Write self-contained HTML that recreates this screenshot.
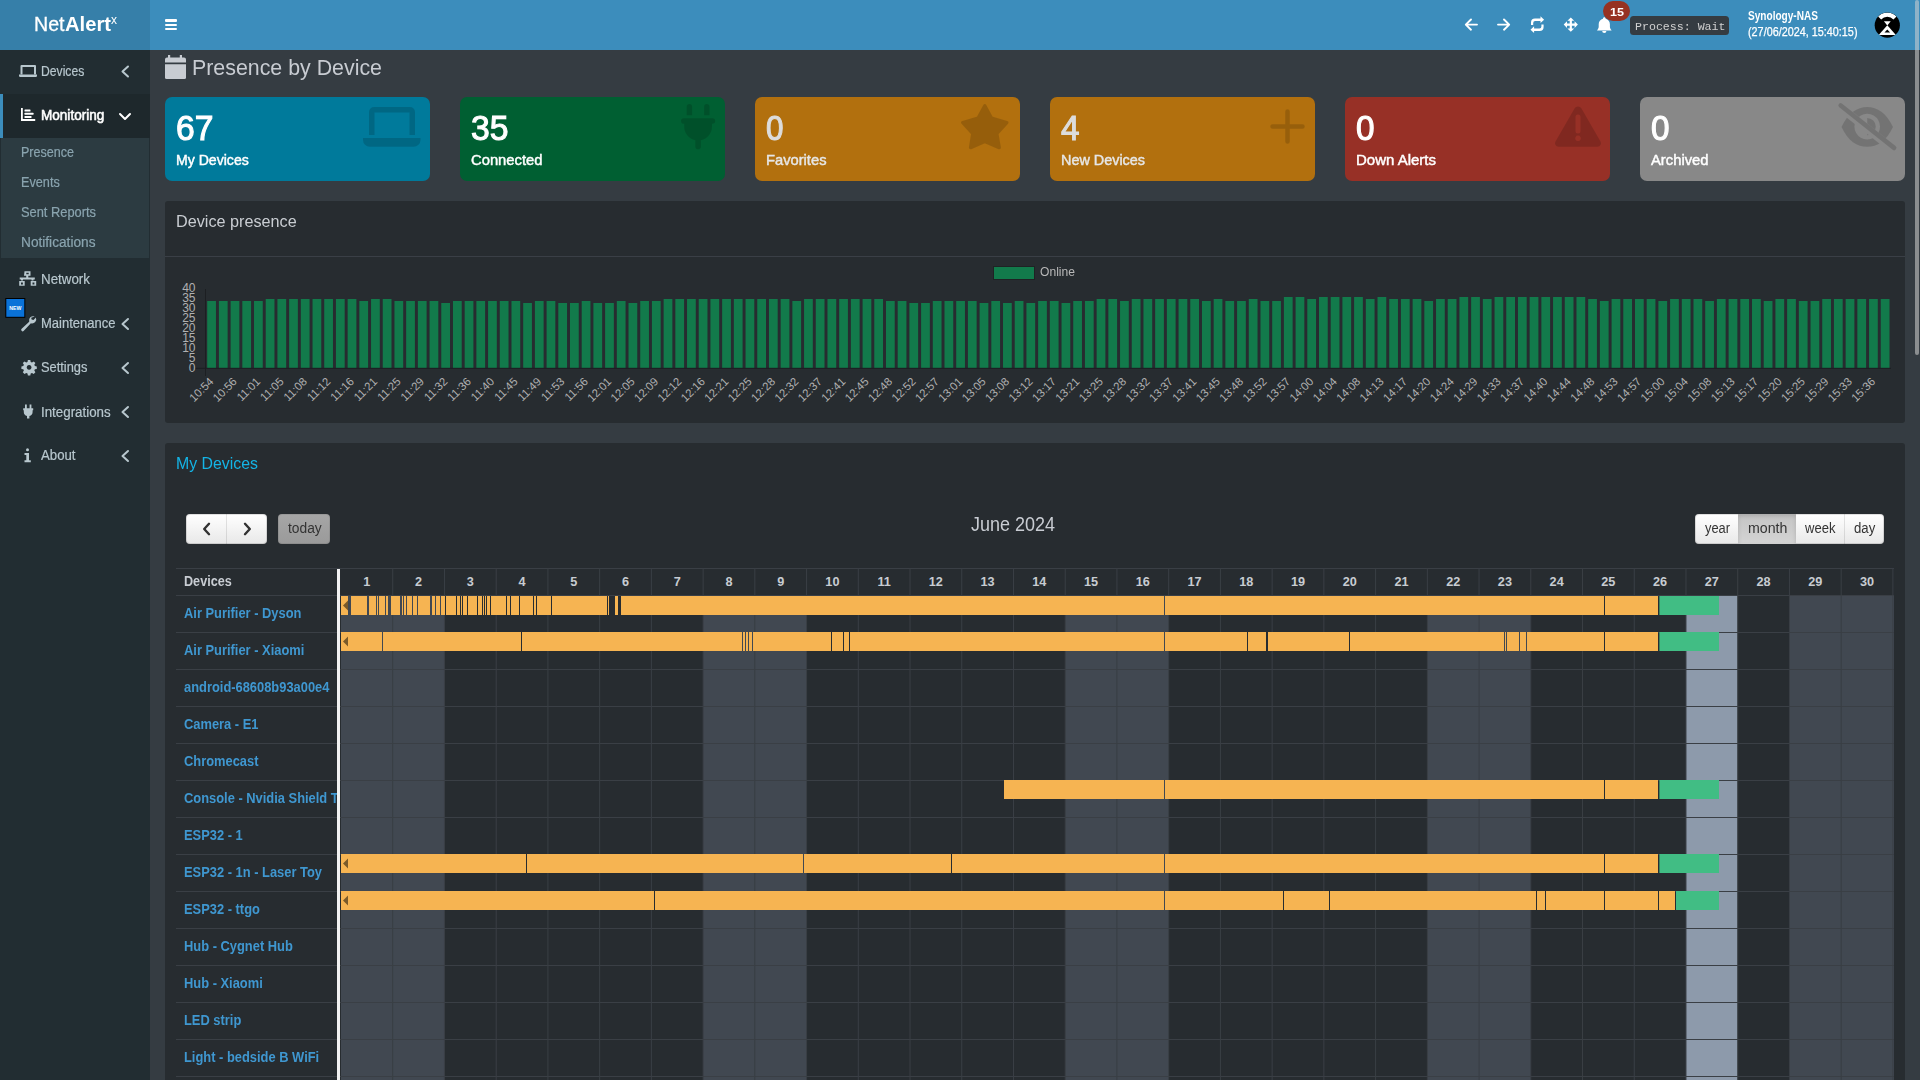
<!DOCTYPE html>
<html><head><meta charset="utf-8"><title>NetAlertX - Presence</title>
<style>
html,body{margin:0;padding:0;width:1920px;height:1080px;overflow:hidden;background:#353c42;font-family:"Liberation Sans",sans-serif}
.r{position:absolute}
.t{position:absolute;white-space:nowrap;line-height:1;transform-origin:0 0}
.btn{background:linear-gradient(#ffffff,#e8e8e8);box-shadow:inset 0 0 0 1px rgba(0,0,0,0.12)}
</style></head><body>
<div class="r" style="left:150.00px;top:50.00px;width:1770.00px;height:1030.00px;background:#353c42;"></div>
<div class="r" style="left:0.00px;top:50.00px;width:150.00px;height:1030.00px;background:#222d32;"></div>
<div class="r" style="left:0.00px;top:0.00px;width:150.00px;height:50.00px;background:#367fa9;"></div>
<div class="r" style="left:150.00px;top:0.00px;width:1770.00px;height:50.00px;background:#3c8dbc;"></div>
<span id="t1" class="t" style="left:34.00px;top:14.25px;font-size:20.50px;color:#fff;font-weight:400;font-family:'Liberation Sans', sans-serif;transform:scaleX(0.9559);-webkit-text-stroke:0.3px #fff;">Net</span>
<span id="t2" class="t" style="left:64.50px;top:14.25px;font-size:20.50px;color:#fff;font-weight:700;font-family:'Liberation Sans', sans-serif;transform:scaleX(0.9846);">Alert</span>
<span id="t3" class="t" style="left:111.00px;top:14.22px;font-size:12.50px;color:#fff;font-weight:400;font-family:'Liberation Sans', sans-serif;transform:scaleX(0.9600);">x</span>
<div class="r" style="left:165.20px;top:19.30px;width:12.00px;height:2.50px;background:#fff;border-radius:1px"></div>
<div class="r" style="left:165.20px;top:23.60px;width:12.00px;height:2.50px;background:#fff;border-radius:1px"></div>
<div class="r" style="left:165.20px;top:27.80px;width:12.00px;height:2.50px;background:#fff;border-radius:1px"></div>

<svg class="r" style="left:0;top:0" width="1920" height="50" viewBox="0 0 1920 50">
 <g fill="none" stroke="#fff" stroke-width="1.9" stroke-linecap="round" stroke-linejoin="round">
  <path d="M1477 24.6H1466 M1471 19.5L1465.8 24.6L1471 29.7"/>
  <path d="M1498 24.6H1509 M1504 19.5L1509.2 24.6L1504 29.7"/>
 </g>
 <g fill="#fff">
  <path d="M1531 25 v-2.5 a4 4 0 0 1 4 -4 h5.5 v-2.2 l3.6 3.4 l-3.6 3.4 v-2.2 h-5.3 a2 2 0 0 0 -2 2 v2.1z"/>
  <path d="M1543.6 24.4 v2.5 a4 4 0 0 1 -4 4 h-5.5 v2.2 l-3.6 -3.4 l3.6 -3.4 v2.2 h5.3 a2 2 0 0 0 2 -2 v-2.1z"/>
  <path d="M1570.8 17.5 l3.4 3.3 h-2.3 v2.7 h2.7 v-2.3 l3.3 3.4 l-3.3 3.4 v-2.3 h-2.7 v2.7 h2.3 l-3.4 3.3 l-3.4 -3.3 h2.3 v-2.7 h-2.7 v2.3 l-3.3 -3.4 l3.3 -3.4 v2.3 h2.7 v-2.7 h-2.3z"/>
  <path d="M1604.3 17.2 c-0.8 0 -1.3 0.6 -1.3 1.3 v0.3 c-2.6 0.6 -4.3 2.8 -4.3 5.5 v2.2 c0 1.3 -0.5 2.5 -1.4 3.5 l-0.3 0.4 h14.6 l-0.3 -0.4 c-0.9 -1 -1.4 -2.2 -1.4 -3.5 v-2.2 c0 -2.7 -1.8 -4.9 -4.3 -5.5 v-0.3 c0 -0.7 -0.5 -1.3 -1.3 -1.3z M1602.2 31 a2.1 2.1 0 0 0 4.2 0z"/>
 </g>
 <rect x="1603" y="1" width="27" height="20" rx="10" fill="#963222"/>
 <rect x="1630" y="16" width="99" height="19" rx="3.5" fill="#353c42"/>
 <clipPath id="avc"><circle cx="1887.3" cy="25.2" r="12.6"/></clipPath>
 <g clip-path="url(#avc)">
  <rect x="1870" y="10" width="35" height="32" fill="#000"/>
  <path d="M1878.08 16.6 A12.6 12.6 0 0 1 1896.52 16.6 L1893.44 19.47 A8.4 8.4 0 0 0 1881.16 19.47z" fill="#fff"/>
  <path d="M1883.9 21.2 h6.8 l-3.4 4.4z" fill="#fff"/>
  <path d="M1887.3 25.3 l8.6 9.6 h-17.2z" fill="#fff"/>
  <path d="M1887.3 29.6 l2.8 2.8 h-5.6z" fill="#000"/>
 </g>
</svg>
<span id="t4" class="t" style="left:1609.50px;top:7.19px;font-size:11.00px;color:#fff;font-weight:700;font-family:'Liberation Sans', sans-serif;transform:scaleX(1.1429);">15</span>
<span id="t5" class="t" style="left:1634.50px;top:20.78px;font-size:11.60px;color:#d0d0d0;font-weight:400;font-family:'Liberation Mono', monospace;transform:scaleX(1.0005);">Process: Wait</span>
<span id="t6" class="t" style="left:1747.50px;top:10.34px;font-size:12.00px;color:#fff;font-weight:700;font-family:'Liberation Sans', sans-serif;transform:scaleX(0.8399);">Synology-NAS</span>
<span id="t7" class="t" style="left:1747.50px;top:26.44px;font-size:12.00px;color:#fff;font-weight:400;font-family:'Liberation Sans', sans-serif;transform:scaleX(0.9017);-webkit-text-stroke:0.25px #fff;">(27/06/2024, 15:40:15)</span>
<div class="r" style="left:0.00px;top:94.00px;width:150.00px;height:44.00px;background:#1e282c;"></div>
<div class="r" style="left:0.00px;top:94.00px;width:3.00px;height:44.00px;background:#3c8dbc;"></div>
<div class="r" style="left:1.00px;top:138.00px;width:148.00px;height:120.00px;background:#2c3b41;"></div>
<span id="t8" class="t" style="left:41.00px;top:64.72px;font-size:13.80px;color:#b8c7ce;font-weight:400;font-family:'Liberation Sans', sans-serif;transform:scaleX(0.8823);-webkit-text-stroke:0.2px #b8c7ce;">Devices</span>
<span id="t9" class="t" style="left:41.00px;top:109.02px;font-size:13.80px;color:#fff;font-weight:400;font-family:'Liberation Sans', sans-serif;transform:scaleX(0.9826);-webkit-text-stroke:0.55px #fff;">Monitoring</span>
<span id="t10" class="t" style="left:41.00px;top:273.32px;font-size:13.80px;color:#b8c7ce;font-weight:400;font-family:'Liberation Sans', sans-serif;transform:scaleX(0.9682);-webkit-text-stroke:0.2px #b8c7ce;">Network</span>
<span id="t11" class="t" style="left:41.00px;top:317.02px;font-size:13.80px;color:#b8c7ce;font-weight:400;font-family:'Liberation Sans', sans-serif;transform:scaleX(0.9441);-webkit-text-stroke:0.2px #b8c7ce;">Maintenance</span>
<span id="t12" class="t" style="left:41.00px;top:361.22px;font-size:13.80px;color:#b8c7ce;font-weight:400;font-family:'Liberation Sans', sans-serif;transform:scaleX(0.9306);-webkit-text-stroke:0.2px #b8c7ce;">Settings</span>
<span id="t13" class="t" style="left:41.00px;top:405.52px;font-size:13.80px;color:#b8c7ce;font-weight:400;font-family:'Liberation Sans', sans-serif;transform:scaleX(0.9666);-webkit-text-stroke:0.2px #b8c7ce;">Integrations</span>
<span id="t14" class="t" style="left:41.00px;top:449.22px;font-size:13.80px;color:#b8c7ce;font-weight:400;font-family:'Liberation Sans', sans-serif;transform:scaleX(0.9567);-webkit-text-stroke:0.2px #b8c7ce;">About</span>
<span id="t15" class="t" style="left:20.80px;top:146.32px;font-size:13.80px;color:#8aa4af;font-weight:400;font-family:'Liberation Sans', sans-serif;transform:scaleX(0.9091);-webkit-text-stroke:0.2px #8aa4af;">Presence</span>
<span id="t16" class="t" style="left:20.80px;top:176.32px;font-size:13.80px;color:#8aa4af;font-weight:400;font-family:'Liberation Sans', sans-serif;transform:scaleX(0.9185);-webkit-text-stroke:0.2px #8aa4af;">Events</span>
<span id="t17" class="t" style="left:20.80px;top:206.32px;font-size:13.80px;color:#8aa4af;font-weight:400;font-family:'Liberation Sans', sans-serif;transform:scaleX(0.9313);-webkit-text-stroke:0.2px #8aa4af;">Sent Reports</span>
<span id="t18" class="t" style="left:20.80px;top:236.32px;font-size:13.80px;color:#8aa4af;font-weight:400;font-family:'Liberation Sans', sans-serif;transform:scaleX(0.9913);-webkit-text-stroke:0.2px #8aa4af;">Notifications</span>

<svg class="r" style="left:0;top:50" width="150" height="430" viewBox="0 50 150 430">
 <g fill="none" stroke="#b8c7ce" stroke-width="2" stroke-linecap="round" stroke-linejoin="round">
  <path d="M128 66.5 L122.5 71.5 L128 76.5"/>
  <path d="M128 319 L122.5 324 L128 329"/>
  <path d="M128 363 L122.5 368 L128 373"/>
  <path d="M128 407 L122.5 412 L128 417"/>
  <path d="M128 451 L122.5 456 L128 461"/>
 </g>
 <path d="M120 114 L125 119 L130 114" fill="none" stroke="#fff" stroke-width="2" stroke-linecap="round" stroke-linejoin="round"/>
 <g fill="#b8c7ce">
  <path d="M21.5 65 h13.5 a1 1 0 0 1 1 1 v8.5 h-2 v-7.5 h-11.5 v7.5 h-2 v-8.5 a1 1 0 0 1 1 -1z"/>
  <path d="M19 74.5 h18 v1.3 a1.2 1.2 0 0 1 -1.2 1.2 h-15.6 a1.2 1.2 0 0 1 -1.2 -1.2z"/>
 </g>
 <g fill="#fff">
  <path d="M21 108 h1.8 v11 h12.4 v2 h-14.2z"/>
  <rect x="24.5" y="109.5" width="6" height="2" rx="0.5"/>
  <rect x="24.5" y="112.8" width="9" height="2" rx="0.5"/>
  <rect x="24.5" y="116" width="7" height="2" rx="0.5"/>
 </g>
 <g fill="#b8c7ce">
  <path d="M24.5 271.3 h6 v4.5 h-2.2 v1.6 h6.5 v2 h-1.3 v1.2 h-2 v-1.2 h-8.5 v1.2 h-2 v-1.2 h-1.3 v-2 h6.5 v-1.6 h-2.2z M26.3 272.8 v1.5 h2.4 v-1.5z"/>
  <path d="M19.2 281 h5.5 v4.8 h-5.5z M21 282.4 v2 h1.9 v-2z"/>
  <path d="M30.7 281 h5.5 v4.8 h-5.5z M32.5 282.4 v2 h1.9 v-2z"/>
  <path d="M34.8 316.5 a4.2 4.2 0 0 0 -5.6 5.2 l-7.8 7.2 a1.6 1.6 0 0 0 2.2 2.2 l7.3 -7.8 a4.2 4.2 0 0 0 5 -5.7 l-2.4 2.4 l-1.9 -0.4 l-0.4 -1.9z"/>
  <path d="M27.9 360 h2.4 l0.4 1.9 l1.3 0.6 l1.7 -1.1 l1.7 1.7 l-1.1 1.7 l0.6 1.3 l1.9 0.4 v2.4 l-1.9 0.4 l-0.6 1.3 l1.1 1.7 l-1.7 1.7 l-1.7 -1.1 l-1.3 0.6 l-0.4 1.9 h-2.4 l-0.4 -1.9 l-1.3 -0.6 l-1.7 1.1 l-1.7 -1.7 l1.1 -1.7 l-0.6 -1.3 l-1.9 -0.4 v-2.4 l1.9 -0.4 l0.6 -1.3 l-1.1 -1.7 l1.7 -1.7 l1.7 1.1 l1.3 -0.6z M29.1 365 a2.4 2.4 0 1 0 0.01 0z"/>
  <path d="M25 404.6 h1.8 v3.6 h2.8 v-3.6 h1.8 v3.6 h1.8 v2 h-0.6 v1.8 a4 4 0 0 1 -3.2 3.9 v2.5 h-2.4 v-2.5 a4 4 0 0 1 -3.2 -3.9 v-1.8 h-0.6 v-2 h1.8z"/>
  <rect x="26" y="448.3" width="3" height="3" rx="1.5"/>
  <path d="M24.5 453 h4.5 v7.3 h1.8 v1.9 h-6.3 v-1.9 h1.8 v-5.4 h-1.8z"/>
 </g>
 <rect x="5.3" y="298" width="20" height="19.8" fill="#000"/>
 <rect x="6.3" y="299" width="18" height="17.8" fill="#0a72d8"/>
 <text x="15.3" y="310.2" font-family="Liberation Sans" font-size="5.2" font-weight="700" fill="#fff" text-anchor="middle">NEW</text>
</svg>
<svg class="r" style="left:163px;top:53px" width="26" height="28" viewBox="163 53 26 28">
 <path d="M168 55 h2.2 v2.5 h9.6 v-2.5 h2.2 v2.5 h2 a2 2 0 0 1 2 2 v3 h-21 v-3 a2 2 0 0 1 2 -2 h1z" fill="#c8ccd2"/>
 <path d="M165 64.2 h21 v13.3 a1.5 1.5 0 0 1 -1.5 1.5 h-18 a1.5 1.5 0 0 1 -1.5 -1.5z" fill="#c8ccd2"/>
</svg>
<span id="t19" class="t" style="left:192.00px;top:58.30px;font-size:21.50px;color:#c8ccd2;font-weight:400;font-family:'Liberation Sans', sans-serif;transform:scaleX(0.9937);">Presence by Device</span>
<div class="r" style="left:165.00px;top:97.00px;width:265.00px;height:84.00px;background:#007a9b;border-radius:7px"></div>
<span id="t20" class="t" style="left:175.60px;top:110.37px;font-size:35.00px;color:#fff;font-weight:400;font-family:'Liberation Sans', sans-serif;transform:scaleX(0.9605);-webkit-text-stroke:1.1px #fff;">67</span>
<span id="t21" class="t" style="left:175.60px;top:152.77px;font-size:14.80px;color:#fff;font-weight:400;font-family:'Liberation Sans', sans-serif;transform:scaleX(0.9520);-webkit-text-stroke:0.45px #fff;">My Devices</span>
<div class="r" style="left:460.00px;top:97.00px;width:265.00px;height:84.00px;background:#005f32;border-radius:7px"></div>
<span id="t22" class="t" style="left:470.60px;top:110.37px;font-size:35.00px;color:#fff;font-weight:400;font-family:'Liberation Sans', sans-serif;transform:scaleX(0.9631);-webkit-text-stroke:1.1px #fff;">35</span>
<span id="t23" class="t" style="left:470.60px;top:152.77px;font-size:14.80px;color:#fff;font-weight:400;font-family:'Liberation Sans', sans-serif;transform:scaleX(0.9989);-webkit-text-stroke:0.45px #fff;">Connected</span>
<div class="r" style="left:755.00px;top:97.00px;width:265.00px;height:84.00px;background:#b2700e;border-radius:7px"></div>
<span id="t24" class="t" style="left:765.60px;top:110.37px;font-size:35.00px;color:#dcdcdc;font-weight:400;font-family:'Liberation Sans', sans-serif;transform:scaleX(0.8989);-webkit-text-stroke:1.1px #dcdcdc;">0</span>
<span id="t25" class="t" style="left:765.60px;top:152.77px;font-size:14.80px;color:#e6e6e6;font-weight:400;font-family:'Liberation Sans', sans-serif;transform:scaleX(0.9941);-webkit-text-stroke:0.45px #e6e6e6;">Favorites</span>
<div class="r" style="left:1050.00px;top:97.00px;width:265.00px;height:84.00px;background:#b2700e;border-radius:7px"></div>
<span id="t26" class="t" style="left:1060.60px;top:110.37px;font-size:35.00px;color:#dcdcdc;font-weight:400;font-family:'Liberation Sans', sans-serif;transform:scaleX(0.9502);-webkit-text-stroke:1.1px #dcdcdc;">4</span>
<span id="t27" class="t" style="left:1060.60px;top:152.77px;font-size:14.80px;color:#e6e6e6;font-weight:400;font-family:'Liberation Sans', sans-serif;transform:scaleX(0.9729);-webkit-text-stroke:0.45px #e6e6e6;">New Devices</span>
<div class="r" style="left:1345.00px;top:97.00px;width:265.00px;height:84.00px;background:#973026;border-radius:7px"></div>
<span id="t28" class="t" style="left:1355.60px;top:110.37px;font-size:35.00px;color:#fff;font-weight:400;font-family:'Liberation Sans', sans-serif;transform:scaleX(0.9502);-webkit-text-stroke:1.1px #fff;">0</span>
<span id="t29" class="t" style="left:1355.60px;top:152.77px;font-size:14.80px;color:#fff;font-weight:400;font-family:'Liberation Sans', sans-serif;transform:scaleX(1.0133);-webkit-text-stroke:0.45px #fff;">Down Alerts</span>
<div class="r" style="left:1640.00px;top:97.00px;width:265.00px;height:84.00px;background:#888888;border-radius:7px"></div>
<span id="t30" class="t" style="left:1650.60px;top:110.37px;font-size:35.00px;color:#fff;font-weight:400;font-family:'Liberation Sans', sans-serif;transform:scaleX(0.9502);-webkit-text-stroke:1.1px #fff;">0</span>
<span id="t31" class="t" style="left:1650.60px;top:152.77px;font-size:14.80px;color:#fff;font-weight:400;font-family:'Liberation Sans', sans-serif;transform:scaleX(0.9986);-webkit-text-stroke:0.45px #fff;">Archived</span>
<svg class="r" style="left:0;top:90px" width="1920" height="70" viewBox="0 90 1920 70">
 <g fill="rgba(0,0,0,0.15)">
  <path d="M374 107 h36 a5 5 0 0 1 5 5 v23 h-5.5 v-22.5 h-35 v22.5 h-5.5 v-23 a5 5 0 0 1 5 -5z"/>
  <path d="M363 138 h57.5 v2 a6.8 6.8 0 0 1 -6.8 6.8 h-43.9 a6.8 6.8 0 0 1 -6.8 -6.8z"/>
  <path d="M689.4 104 a2.7 2.7 0 0 1 2.7 2.7 v8.5 h-5.4 v-8.5 a2.7 2.7 0 0 1 2.7 -2.7z M706.8 104 a2.7 2.7 0 0 1 2.7 2.7 v8.5 h-5.4 v-8.5 a2.7 2.7 0 0 1 2.7 -2.7z"/>
  <path d="M683.8 118.2 h28.6 a2.8 2.8 0 0 1 0 5.6 h-0.4 v2.5 a14 14 0 0 1 -11.1 14 v6.2 a2.8 2.8 0 0 1 -5.6 0 v-6.2 a14 14 0 0 1 -11.1 -14 v-2.5 h-0.4 a2.8 2.8 0 0 1 0 -5.6z"/>
  <path d="M1578 106.5 a4 4 0 0 1 3.5 2 l19 33 a3.5 3.5 0 0 1 -3 5.3 h-39 a3.5 3.5 0 0 1 -3 -5.3 l19 -33 a4 4 0 0 1 3.5 -2z M1575.5 117 v14 a2.5 2.5 0 0 0 5 0 v-14 a2.5 2.5 0 0 0 -5 0z M1578 135.5 a2.8 2.8 0 1 0 0.01 0z"/>
 </g>
 <g opacity="0.15"><path d="M984.8 105.8 L991.6 118.2 L1006.8 122.6 L996.8 133.6 L999.2 147.6 L984.8 141.4 L970.6 147.6 L972.8 133.6 L962.8 122.6 L978 118.2z" fill="#000" stroke="#000" stroke-width="3.4" stroke-linejoin="round"/></g>
 <path d="M1287.5 111.5 v30 M1272.5 126.5 h30" stroke="rgba(0,0,0,0.15)" stroke-width="4.5" stroke-linecap="round"/>
 <mask id="eyem"><rect x="1830" y="95" width="75" height="60" fill="#fff"/><path d="M1839.67 106.79 L1893.07 149.19" stroke="#000" stroke-width="8.2"/></mask>
 <g fill="rgba(0,0,0,0.15)">
  <path mask="url(#eyem)" fill-rule="evenodd" d="M1841.5 126.9 C1848 113 1857 106.9 1867.2 106.9 C1877.4 106.9 1886.5 113 1893 126.9 C1886.5 140.8 1877.4 146.8 1867.2 146.8 C1857 146.8 1848 140.8 1841.5 126.9z M1867.2 113.8 a12.8 12.8 0 1 0 0.01 0z M1867.2 118 a8.6 8.6 0 0 1 0 17.2z"/>
 </g>
 <path d="M1840.7 105.5 L1894.1 147.9" stroke="rgba(0,0,0,0.15)" stroke-width="4.7" stroke-linecap="round"/>
</svg>
<div class="r" style="left:165.00px;top:201.00px;width:1740.00px;height:221.50px;background:#272c30;border-radius:3px"></div>
<div class="r" style="left:165.00px;top:256.00px;width:1740.00px;height:1.00px;background:#3a3f46;"></div>
<span id="t32" class="t" style="left:176.25px;top:212.94px;font-size:17.20px;color:#c9cdd2;font-weight:400;font-family:'Liberation Sans', sans-serif;transform:scaleX(0.9431);">Device presence</span>
<div class="r" style="left:994.00px;top:267.00px;width:40.00px;height:12.00px;background:#127a4b;outline:1px solid rgba(20,20,20,0.4)"></div>
<span id="t33" class="t" style="left:1040.30px;top:265.87px;font-size:12.20px;color:#b8b8b8;font-weight:400;font-family:'Liberation Sans', sans-serif;transform:scaleX(0.9933);">Online</span>
<svg class="r" style="left:0;top:270px" width="1920" height="150" viewBox="0 270 1920 150"><g fill="#127a4b"><rect x="207.20" y="301" width="8.75" height="67"/><rect x="218.90" y="301" width="8.75" height="67"/><rect x="230.61" y="301" width="8.75" height="67"/><rect x="242.31" y="301" width="8.75" height="67"/><rect x="254.01" y="301" width="8.75" height="67"/><rect x="265.72" y="299" width="8.75" height="69"/><rect x="277.42" y="299" width="8.75" height="69"/><rect x="289.12" y="299" width="8.75" height="69"/><rect x="300.82" y="299" width="8.75" height="69"/><rect x="312.53" y="299" width="8.75" height="69"/><rect x="324.23" y="299" width="8.75" height="69"/><rect x="335.93" y="299" width="8.75" height="69"/><rect x="347.64" y="299" width="8.75" height="69"/><rect x="359.34" y="301" width="8.75" height="67"/><rect x="371.04" y="299" width="8.75" height="69"/><rect x="382.75" y="299" width="8.75" height="69"/><rect x="394.45" y="301" width="8.75" height="67"/><rect x="406.15" y="301" width="8.75" height="67"/><rect x="417.86" y="301" width="8.75" height="67"/><rect x="429.56" y="301" width="8.75" height="67"/><rect x="441.26" y="303" width="8.75" height="65"/><rect x="452.97" y="301" width="8.75" height="67"/><rect x="464.67" y="301" width="8.75" height="67"/><rect x="476.37" y="301" width="8.75" height="67"/><rect x="488.07" y="301" width="8.75" height="67"/><rect x="499.78" y="301" width="8.75" height="67"/><rect x="511.48" y="301" width="8.75" height="67"/><rect x="523.18" y="303" width="8.75" height="65"/><rect x="534.89" y="301" width="8.75" height="67"/><rect x="546.59" y="301" width="8.75" height="67"/><rect x="558.29" y="303" width="8.75" height="65"/><rect x="570.00" y="303" width="8.75" height="65"/><rect x="581.70" y="301" width="8.75" height="67"/><rect x="593.40" y="303" width="8.75" height="65"/><rect x="605.11" y="303" width="8.75" height="65"/><rect x="616.81" y="301" width="8.75" height="67"/><rect x="628.51" y="303" width="8.75" height="65"/><rect x="640.22" y="301" width="8.75" height="67"/><rect x="651.92" y="301" width="8.75" height="67"/><rect x="663.62" y="299" width="8.75" height="69"/><rect x="675.33" y="299" width="8.75" height="69"/><rect x="687.03" y="299" width="8.75" height="69"/><rect x="698.73" y="299" width="8.75" height="69"/><rect x="710.43" y="299" width="8.75" height="69"/><rect x="722.14" y="299" width="8.75" height="69"/><rect x="733.84" y="299" width="8.75" height="69"/><rect x="745.54" y="299" width="8.75" height="69"/><rect x="757.25" y="299" width="8.75" height="69"/><rect x="768.95" y="299" width="8.75" height="69"/><rect x="780.65" y="299" width="8.75" height="69"/><rect x="792.36" y="301" width="8.75" height="67"/><rect x="804.06" y="299" width="8.75" height="69"/><rect x="815.76" y="299" width="8.75" height="69"/><rect x="827.47" y="299" width="8.75" height="69"/><rect x="839.17" y="299" width="8.75" height="69"/><rect x="850.87" y="299" width="8.75" height="69"/><rect x="862.58" y="299" width="8.75" height="69"/><rect x="874.28" y="299" width="8.75" height="69"/><rect x="885.98" y="301" width="8.75" height="67"/><rect x="897.68" y="301" width="8.75" height="67"/><rect x="909.39" y="303" width="8.75" height="65"/><rect x="921.09" y="303" width="8.75" height="65"/><rect x="932.79" y="301" width="8.75" height="67"/><rect x="944.50" y="301" width="8.75" height="67"/><rect x="956.20" y="301" width="8.75" height="67"/><rect x="967.90" y="301" width="8.75" height="67"/><rect x="979.61" y="303" width="8.75" height="65"/><rect x="991.31" y="301" width="8.75" height="67"/><rect x="1003.01" y="303" width="8.75" height="65"/><rect x="1014.72" y="301" width="8.75" height="67"/><rect x="1026.42" y="303" width="8.75" height="65"/><rect x="1038.12" y="301" width="8.75" height="67"/><rect x="1049.83" y="301" width="8.75" height="67"/><rect x="1061.53" y="303" width="8.75" height="65"/><rect x="1073.23" y="301" width="8.75" height="67"/><rect x="1084.93" y="301" width="8.75" height="67"/><rect x="1096.64" y="299" width="8.75" height="69"/><rect x="1108.34" y="299" width="8.75" height="69"/><rect x="1120.04" y="301" width="8.75" height="67"/><rect x="1131.75" y="299" width="8.75" height="69"/><rect x="1143.45" y="299" width="8.75" height="69"/><rect x="1155.15" y="299" width="8.75" height="69"/><rect x="1166.86" y="299" width="8.75" height="69"/><rect x="1178.56" y="299" width="8.75" height="69"/><rect x="1190.26" y="299" width="8.75" height="69"/><rect x="1201.97" y="301" width="8.75" height="67"/><rect x="1213.67" y="299" width="8.75" height="69"/><rect x="1225.37" y="301" width="8.75" height="67"/><rect x="1237.08" y="301" width="8.75" height="67"/><rect x="1248.78" y="299" width="8.75" height="69"/><rect x="1260.48" y="301" width="8.75" height="67"/><rect x="1272.18" y="301" width="8.75" height="67"/><rect x="1283.89" y="297" width="8.75" height="71"/><rect x="1295.59" y="297" width="8.75" height="71"/><rect x="1307.29" y="299" width="8.75" height="69"/><rect x="1319.00" y="297" width="8.75" height="71"/><rect x="1330.70" y="297" width="8.75" height="71"/><rect x="1342.40" y="297" width="8.75" height="71"/><rect x="1354.11" y="297" width="8.75" height="71"/><rect x="1365.81" y="299" width="8.75" height="69"/><rect x="1377.51" y="297" width="8.75" height="71"/><rect x="1389.22" y="299" width="8.75" height="69"/><rect x="1400.92" y="299" width="8.75" height="69"/><rect x="1412.62" y="299" width="8.75" height="69"/><rect x="1424.33" y="301" width="8.75" height="67"/><rect x="1436.03" y="299" width="8.75" height="69"/><rect x="1447.73" y="299" width="8.75" height="69"/><rect x="1459.43" y="297" width="8.75" height="71"/><rect x="1471.14" y="297" width="8.75" height="71"/><rect x="1482.84" y="299" width="8.75" height="69"/><rect x="1494.54" y="297" width="8.75" height="71"/><rect x="1506.25" y="297" width="8.75" height="71"/><rect x="1517.95" y="297" width="8.75" height="71"/><rect x="1529.65" y="297" width="8.75" height="71"/><rect x="1541.36" y="297" width="8.75" height="71"/><rect x="1553.06" y="297" width="8.75" height="71"/><rect x="1564.76" y="297" width="8.75" height="71"/><rect x="1576.47" y="297" width="8.75" height="71"/><rect x="1588.17" y="299" width="8.75" height="69"/><rect x="1599.87" y="301" width="8.75" height="67"/><rect x="1611.58" y="299" width="8.75" height="69"/><rect x="1623.28" y="299" width="8.75" height="69"/><rect x="1634.98" y="299" width="8.75" height="69"/><rect x="1646.68" y="299" width="8.75" height="69"/><rect x="1658.39" y="301" width="8.75" height="67"/><rect x="1670.09" y="299" width="8.75" height="69"/><rect x="1681.79" y="299" width="8.75" height="69"/><rect x="1693.50" y="299" width="8.75" height="69"/><rect x="1705.20" y="301" width="8.75" height="67"/><rect x="1716.90" y="299" width="8.75" height="69"/><rect x="1728.61" y="299" width="8.75" height="69"/><rect x="1740.31" y="299" width="8.75" height="69"/><rect x="1752.01" y="299" width="8.75" height="69"/><rect x="1763.72" y="301" width="8.75" height="67"/><rect x="1775.42" y="299" width="8.75" height="69"/><rect x="1787.12" y="299" width="8.75" height="69"/><rect x="1798.83" y="301" width="8.75" height="67"/><rect x="1810.53" y="301" width="8.75" height="67"/><rect x="1822.23" y="299" width="8.75" height="69"/><rect x="1833.93" y="299" width="8.75" height="69"/><rect x="1845.64" y="299" width="8.75" height="69"/><rect x="1857.34" y="299" width="8.75" height="69"/><rect x="1869.04" y="299" width="8.75" height="69"/><rect x="1880.75" y="299" width="8.75" height="69"/></g><path d="M205.5 289 V376 M195.5 368.3 H1891" stroke="#1c1f22" stroke-width="1" fill="none"/><g font-family="Liberation Sans" font-size="12" fill="#b0b0b0" text-anchor="end"><text x="195.5" y="372.3">0</text><text x="195.5" y="362.3">5</text><text x="195.5" y="352.3">10</text><text x="195.5" y="342.3">15</text><text x="195.5" y="332.3">20</text><text x="195.5" y="322.3">25</text><text x="195.5" y="312.3">30</text><text x="195.5" y="302.3">35</text><text x="195.5" y="292.3">40</text><text font-size="11.4" transform="translate(214.20 382.3) rotate(-45)">10:54</text><text font-size="11.4" transform="translate(237.61 382.3) rotate(-45)">10:56</text><text font-size="11.4" transform="translate(261.01 382.3) rotate(-45)">11:01</text><text font-size="11.4" transform="translate(284.42 382.3) rotate(-45)">11:05</text><text font-size="11.4" transform="translate(307.82 382.3) rotate(-45)">11:08</text><text font-size="11.4" transform="translate(331.23 382.3) rotate(-45)">11:12</text><text font-size="11.4" transform="translate(354.64 382.3) rotate(-45)">11:16</text><text font-size="11.4" transform="translate(378.04 382.3) rotate(-45)">11:21</text><text font-size="11.4" transform="translate(401.45 382.3) rotate(-45)">11:25</text><text font-size="11.4" transform="translate(424.86 382.3) rotate(-45)">11:29</text><text font-size="11.4" transform="translate(448.26 382.3) rotate(-45)">11:32</text><text font-size="11.4" transform="translate(471.67 382.3) rotate(-45)">11:36</text><text font-size="11.4" transform="translate(495.07 382.3) rotate(-45)">11:40</text><text font-size="11.4" transform="translate(518.48 382.3) rotate(-45)">11:45</text><text font-size="11.4" transform="translate(541.89 382.3) rotate(-45)">11:49</text><text font-size="11.4" transform="translate(565.29 382.3) rotate(-45)">11:53</text><text font-size="11.4" transform="translate(588.70 382.3) rotate(-45)">11:56</text><text font-size="11.4" transform="translate(612.11 382.3) rotate(-45)">12:01</text><text font-size="11.4" transform="translate(635.51 382.3) rotate(-45)">12:05</text><text font-size="11.4" transform="translate(658.92 382.3) rotate(-45)">12:09</text><text font-size="11.4" transform="translate(682.33 382.3) rotate(-45)">12:12</text><text font-size="11.4" transform="translate(705.73 382.3) rotate(-45)">12:16</text><text font-size="11.4" transform="translate(729.14 382.3) rotate(-45)">12:21</text><text font-size="11.4" transform="translate(752.54 382.3) rotate(-45)">12:25</text><text font-size="11.4" transform="translate(775.95 382.3) rotate(-45)">12:28</text><text font-size="11.4" transform="translate(799.36 382.3) rotate(-45)">12:32</text><text font-size="11.4" transform="translate(822.76 382.3) rotate(-45)">12:37</text><text font-size="11.4" transform="translate(846.17 382.3) rotate(-45)">12:41</text><text font-size="11.4" transform="translate(869.58 382.3) rotate(-45)">12:45</text><text font-size="11.4" transform="translate(892.98 382.3) rotate(-45)">12:48</text><text font-size="11.4" transform="translate(916.39 382.3) rotate(-45)">12:52</text><text font-size="11.4" transform="translate(939.79 382.3) rotate(-45)">12:57</text><text font-size="11.4" transform="translate(963.20 382.3) rotate(-45)">13:01</text><text font-size="11.4" transform="translate(986.61 382.3) rotate(-45)">13:05</text><text font-size="11.4" transform="translate(1010.01 382.3) rotate(-45)">13:08</text><text font-size="11.4" transform="translate(1033.42 382.3) rotate(-45)">13:12</text><text font-size="11.4" transform="translate(1056.83 382.3) rotate(-45)">13:17</text><text font-size="11.4" transform="translate(1080.23 382.3) rotate(-45)">13:21</text><text font-size="11.4" transform="translate(1103.64 382.3) rotate(-45)">13:25</text><text font-size="11.4" transform="translate(1127.04 382.3) rotate(-45)">13:28</text><text font-size="11.4" transform="translate(1150.45 382.3) rotate(-45)">13:32</text><text font-size="11.4" transform="translate(1173.86 382.3) rotate(-45)">13:37</text><text font-size="11.4" transform="translate(1197.26 382.3) rotate(-45)">13:41</text><text font-size="11.4" transform="translate(1220.67 382.3) rotate(-45)">13:45</text><text font-size="11.4" transform="translate(1244.08 382.3) rotate(-45)">13:48</text><text font-size="11.4" transform="translate(1267.48 382.3) rotate(-45)">13:52</text><text font-size="11.4" transform="translate(1290.89 382.3) rotate(-45)">13:57</text><text font-size="11.4" transform="translate(1314.29 382.3) rotate(-45)">14:00</text><text font-size="11.4" transform="translate(1337.70 382.3) rotate(-45)">14:04</text><text font-size="11.4" transform="translate(1361.11 382.3) rotate(-45)">14:08</text><text font-size="11.4" transform="translate(1384.51 382.3) rotate(-45)">14:13</text><text font-size="11.4" transform="translate(1407.92 382.3) rotate(-45)">14:17</text><text font-size="11.4" transform="translate(1431.33 382.3) rotate(-45)">14:20</text><text font-size="11.4" transform="translate(1454.73 382.3) rotate(-45)">14:24</text><text font-size="11.4" transform="translate(1478.14 382.3) rotate(-45)">14:29</text><text font-size="11.4" transform="translate(1501.54 382.3) rotate(-45)">14:33</text><text font-size="11.4" transform="translate(1524.95 382.3) rotate(-45)">14:37</text><text font-size="11.4" transform="translate(1548.36 382.3) rotate(-45)">14:40</text><text font-size="11.4" transform="translate(1571.76 382.3) rotate(-45)">14:44</text><text font-size="11.4" transform="translate(1595.17 382.3) rotate(-45)">14:48</text><text font-size="11.4" transform="translate(1618.58 382.3) rotate(-45)">14:53</text><text font-size="11.4" transform="translate(1641.98 382.3) rotate(-45)">14:57</text><text font-size="11.4" transform="translate(1665.39 382.3) rotate(-45)">15:00</text><text font-size="11.4" transform="translate(1688.79 382.3) rotate(-45)">15:04</text><text font-size="11.4" transform="translate(1712.20 382.3) rotate(-45)">15:08</text><text font-size="11.4" transform="translate(1735.61 382.3) rotate(-45)">15:13</text><text font-size="11.4" transform="translate(1759.01 382.3) rotate(-45)">15:17</text><text font-size="11.4" transform="translate(1782.42 382.3) rotate(-45)">15:20</text><text font-size="11.4" transform="translate(1805.83 382.3) rotate(-45)">15:25</text><text font-size="11.4" transform="translate(1829.23 382.3) rotate(-45)">15:29</text><text font-size="11.4" transform="translate(1852.64 382.3) rotate(-45)">15:33</text><text font-size="11.4" transform="translate(1876.04 382.3) rotate(-45)">15:36</text></g></svg>
<div class="r" style="left:165.00px;top:443.00px;width:1740.00px;height:700.00px;background:#272c30;border-radius:3px"></div>
<span id="t34" class="t" style="left:176.25px;top:454.86px;font-size:17.00px;color:#14b4e6;font-weight:400;font-family:'Liberation Sans', sans-serif;transform:scaleX(0.9333);">My Devices</span>
<div class="r btn" style="left:185.75px;top:514.25px;width:81.25px;height:29.5px;border-radius:4px"></div>
<div class="r" style="left:225.80px;top:514.25px;width:1.00px;height:29.50px;background:rgba(0,0,0,0.1);"></div>
<svg class="r" style="left:185px;top:514px" width="82" height="30" viewBox="185 514 82 30">
 <path d="M209 523.8 L204.2 529 L209 534.2 M245 523.8 L249.8 529 L245 534.2" fill="none" stroke="#333" stroke-width="2.4" stroke-linecap="round" stroke-linejoin="round"/>
</svg>
<div class="r" style="left:278px;top:514.25px;width:52px;height:29.5px;border-radius:4px;background:linear-gradient(#a6a6a6,#9a9a9a);box-shadow:inset 0 0 0 1px rgba(0,0,0,0.08)"></div>
<span id="t35" class="t" style="left:287.50px;top:521.15px;font-size:14.00px;color:#333;font-weight:400;font-family:'Liberation Sans', sans-serif;transform:scaleX(0.9854);">today</span>
<span id="t36" class="t" style="left:970.80px;top:515.18px;font-size:19.40px;color:#c8ccd2;font-weight:400;font-family:'Liberation Sans', sans-serif;transform:scaleX(0.9274);">June 2024</span>
<div class="r btn" style="left:1695px;top:514.25px;width:189px;height:29.5px;border-radius:4px"></div>
<div class="r" style="left:1738px;top:514.25px;width:57.6px;height:29.5px;background:linear-gradient(#c4c4c4,#d4d4d4);box-shadow:inset 0 2px 4px rgba(0,0,0,0.15)"></div>
<div class="r" style="left:1844.40px;top:514.25px;width:1.00px;height:29.50px;background:rgba(0,0,0,0.1);"></div>
<span id="t37" class="t" style="left:1705.00px;top:521.15px;font-size:14.00px;color:#333;font-weight:400;font-family:'Liberation Sans', sans-serif;transform:scaleX(0.9180);">year</span>
<span id="t38" class="t" style="left:1747.50px;top:521.15px;font-size:14.00px;color:#333;font-weight:400;font-family:'Liberation Sans', sans-serif;transform:scaleX(1.0123);">month</span>
<span id="t39" class="t" style="left:1805.00px;top:521.15px;font-size:14.00px;color:#333;font-weight:400;font-family:'Liberation Sans', sans-serif;transform:scaleX(0.9300);">week</span>
<span id="t40" class="t" style="left:1853.50px;top:521.15px;font-size:14.00px;color:#333;font-weight:400;font-family:'Liberation Sans', sans-serif;transform:scaleX(0.9412);">day</span>
<svg class="r" style="left:0;top:560px" width="1920" height="520" viewBox="0 560 1920 520"><rect x="341.00" y="595" width="51.73" height="485" fill="#414851"/><rect x="392.73" y="595" width="51.73" height="485" fill="#414851"/><rect x="703.11" y="595" width="51.73" height="485" fill="#414851"/><rect x="754.84" y="595" width="51.73" height="485" fill="#414851"/><rect x="1065.22" y="595" width="51.73" height="485" fill="#414851"/><rect x="1116.95" y="595" width="51.73" height="485" fill="#414851"/><rect x="1427.33" y="595" width="51.73" height="485" fill="#414851"/><rect x="1479.06" y="595" width="51.73" height="485" fill="#414851"/><rect x="1789.44" y="595" width="51.73" height="485" fill="#414851"/><rect x="1841.17" y="595" width="52.83" height="485" fill="#414851"/><rect x="1685.98" y="595.5" width="51.73" height="485" fill="#8d9aab"/><g stroke="#3a3f45" stroke-width="1"><path d="M176 568.5 H1894"/><path d="M176 595.5 H1894"/><path d="M176 632.5 H1894"/><path d="M176 669.5 H1894"/><path d="M176 706.5 H1894"/><path d="M176 743.5 H1894"/><path d="M176 780.5 H1894"/><path d="M176 817.5 H1894"/><path d="M176 854.5 H1894"/><path d="M176 891.5 H1894"/><path d="M176 928.5 H1894"/><path d="M176 965.5 H1894"/><path d="M176 1002.5 H1894"/><path d="M176 1039.5 H1894"/><path d="M176 1076.5 H1894"/><path d="M392.73 568 V1080"/><path d="M444.46 568 V1080"/><path d="M496.19 568 V1080"/><path d="M547.92 568 V1080"/><path d="M599.65 568 V1080"/><path d="M651.38 568 V1080"/><path d="M703.11 568 V1080"/><path d="M754.84 568 V1080"/><path d="M806.57 568 V1080"/><path d="M858.30 568 V1080"/><path d="M910.03 568 V1080"/><path d="M961.76 568 V1080"/><path d="M1013.49 568 V1080"/><path d="M1065.22 568 V1080"/><path d="M1116.95 568 V1080"/><path d="M1168.68 568 V1080"/><path d="M1220.41 568 V1080"/><path d="M1272.14 568 V1080"/><path d="M1323.87 568 V1080"/><path d="M1375.60 568 V1080"/><path d="M1427.33 568 V1080"/><path d="M1479.06 568 V1080"/><path d="M1530.79 568 V1080"/><path d="M1582.52 568 V1080"/><path d="M1634.25 568 V1080"/><path d="M1685.98 568 V1080"/><path d="M1737.71 568 V1080"/><path d="M1789.44 568 V1080"/><path d="M1841.17 568 V1080"/><path d="M1892.90 568 V1080"/></g><rect x="337" y="569" width="3" height="511" fill="#f2f2f2"/><rect x="341.00" y="596.00" width="1317.00" height="19" fill="#f6b452"/><rect x="348.00" y="596.00" width="3.00" height="19" fill="#414851" class="gap"/><rect x="367.00" y="596.00" width="2.00" height="19" fill="#414851" class="gap"/><rect x="376.00" y="596.00" width="1.00" height="19" fill="#414851" class="gap"/><rect x="378.00" y="596.00" width="1.00" height="19" fill="#414851" class="gap"/><rect x="385.00" y="596.00" width="1.00" height="19" fill="#414851" class="gap"/><rect x="388.00" y="596.00" width="3.00" height="19" fill="#414851" class="gap"/><rect x="400.00" y="596.00" width="2.00" height="19" fill="#414851" class="gap"/><rect x="403.00" y="596.00" width="1.00" height="19" fill="#414851" class="gap"/><rect x="406.00" y="596.00" width="1.00" height="19" fill="#414851" class="gap"/><rect x="412.00" y="596.00" width="1.00" height="19" fill="#414851" class="gap"/><rect x="417.00" y="596.00" width="1.00" height="19" fill="#414851" class="gap"/><rect x="430.00" y="596.00" width="1.00" height="19" fill="#414851" class="gap"/><rect x="431.00" y="596.00" width="1.00" height="19" fill="#414851" class="gap"/><rect x="435.00" y="596.00" width="1.00" height="19" fill="#414851" class="gap"/><rect x="440.00" y="596.00" width="1.00" height="19" fill="#414851" class="gap"/><rect x="445.00" y="596.00" width="1.00" height="19" fill="#272c30" class="gap"/><rect x="456.00" y="596.00" width="1.00" height="19" fill="#272c30" class="gap"/><rect x="460.00" y="596.00" width="1.00" height="19" fill="#272c30" class="gap"/><rect x="462.00" y="596.00" width="1.00" height="19" fill="#272c30" class="gap"/><rect x="467.00" y="596.00" width="1.00" height="19" fill="#272c30" class="gap"/><rect x="477.00" y="596.00" width="1.00" height="19" fill="#272c30" class="gap"/><rect x="482.00" y="596.00" width="1.00" height="19" fill="#272c30" class="gap"/><rect x="484.00" y="596.00" width="1.00" height="19" fill="#272c30" class="gap"/><rect x="486.00" y="596.00" width="1.00" height="19" fill="#272c30" class="gap"/><rect x="490.00" y="596.00" width="1.00" height="19" fill="#272c30" class="gap"/><rect x="506.00" y="596.00" width="1.00" height="19" fill="#272c30" class="gap"/><rect x="510.00" y="596.00" width="1.00" height="19" fill="#272c30" class="gap"/><rect x="519.00" y="596.00" width="1.00" height="19" fill="#272c30" class="gap"/><rect x="533.00" y="596.00" width="1.00" height="19" fill="#272c30" class="gap"/><rect x="536.00" y="596.00" width="1.00" height="19" fill="#272c30" class="gap"/><rect x="551.00" y="596.00" width="1.00" height="19" fill="#272c30" class="gap"/><rect x="607.00" y="596.00" width="1.00" height="19" fill="#272c30" class="gap"/><rect x="609.00" y="596.00" width="6.00" height="19" fill="#272c30" class="gap"/><rect x="618.00" y="596.00" width="3.00" height="19" fill="#272c30" class="gap"/><rect x="1164.00" y="596.00" width="1.00" height="19" fill="#414851" class="gap"/><rect x="1604.00" y="596.00" width="1.00" height="19" fill="#272c30" class="gap"/><rect x="1659.40" y="596.00" width="59.60" height="19" fill="#41bd84"/><path d="M343.0 605.5 l5 -5 v10z" fill="#7a5a2a"/><rect x="341.00" y="632.00" width="1317.00" height="19" fill="#f6b452"/><rect x="382.00" y="632.00" width="1.00" height="19" fill="#414851" class="gap"/><rect x="521.00" y="632.00" width="1.00" height="19" fill="#272c30" class="gap"/><rect x="742.00" y="632.00" width="1.00" height="19" fill="#414851" class="gap"/><rect x="745.00" y="632.00" width="1.00" height="19" fill="#414851" class="gap"/><rect x="748.00" y="632.00" width="1.00" height="19" fill="#414851" class="gap"/><rect x="752.00" y="632.00" width="1.00" height="19" fill="#414851" class="gap"/><rect x="831.00" y="632.00" width="1.00" height="19" fill="#272c30" class="gap"/><rect x="843.00" y="632.00" width="1.00" height="19" fill="#272c30" class="gap"/><rect x="849.00" y="632.00" width="1.00" height="19" fill="#272c30" class="gap"/><rect x="1164.00" y="632.00" width="1.00" height="19" fill="#414851" class="gap"/><rect x="1247.00" y="632.00" width="1.00" height="19" fill="#272c30" class="gap"/><rect x="1266.00" y="632.00" width="2.00" height="19" fill="#272c30" class="gap"/><rect x="1349.00" y="632.00" width="1.00" height="19" fill="#272c30" class="gap"/><rect x="1504.00" y="632.00" width="1.00" height="19" fill="#414851" class="gap"/><rect x="1506.00" y="632.00" width="1.00" height="19" fill="#414851" class="gap"/><rect x="1519.00" y="632.00" width="1.00" height="19" fill="#414851" class="gap"/><rect x="1526.00" y="632.00" width="1.00" height="19" fill="#414851" class="gap"/><rect x="1604.00" y="632.00" width="1.00" height="19" fill="#272c30" class="gap"/><rect x="1659.40" y="632.00" width="59.60" height="19" fill="#41bd84"/><path d="M343.0 641.5 l5 -5 v10z" fill="#7a5a2a"/><rect x="1004.00" y="780.00" width="654.00" height="19" fill="#f6b452"/><rect x="1164.00" y="780.00" width="1.00" height="19" fill="#414851" class="gap"/><rect x="1604.00" y="780.00" width="1.00" height="19" fill="#272c30" class="gap"/><rect x="1659.40" y="780.00" width="59.60" height="19" fill="#41bd84"/><rect x="341.00" y="854.00" width="1317.00" height="19" fill="#f6b452"/><rect x="526.00" y="854.00" width="1.00" height="19" fill="#272c30" class="gap"/><rect x="803.00" y="854.00" width="1.00" height="19" fill="#414851" class="gap"/><rect x="951.00" y="854.00" width="1.00" height="19" fill="#272c30" class="gap"/><rect x="1164.00" y="854.00" width="1.00" height="19" fill="#414851" class="gap"/><rect x="1604.00" y="854.00" width="1.00" height="19" fill="#272c30" class="gap"/><rect x="1659.40" y="854.00" width="59.60" height="19" fill="#41bd84"/><path d="M343.0 863.5 l5 -5 v10z" fill="#7a5a2a"/><rect x="341.00" y="891.00" width="1334.00" height="19" fill="#f6b452"/><rect x="654.00" y="891.00" width="1.00" height="19" fill="#272c30" class="gap"/><rect x="1164.00" y="891.00" width="1.00" height="19" fill="#414851" class="gap"/><rect x="1283.00" y="891.00" width="1.00" height="19" fill="#272c30" class="gap"/><rect x="1329.00" y="891.00" width="1.00" height="19" fill="#272c30" class="gap"/><rect x="1536.00" y="891.00" width="1.00" height="19" fill="#272c30" class="gap"/><rect x="1545.00" y="891.00" width="1.00" height="19" fill="#272c30" class="gap"/><rect x="1604.00" y="891.00" width="1.00" height="19" fill="#272c30" class="gap"/><rect x="1658.00" y="891.00" width="1.00" height="19" fill="#272c30" class="gap"/><rect x="1676.00" y="891.00" width="43.00" height="19" fill="#41bd84"/><path d="M343.0 900.5 l5 -5 v10z" fill="#7a5a2a"/></svg>
<span id="t41" class="t" style="left:184.25px;top:574.57px;font-size:13.80px;color:#c8ccd2;font-weight:700;font-family:'Liberation Sans', sans-serif;transform:scaleX(0.9152);">Devices</span>
<span class="t" style="left:366.87px;top:576.25px;width:40px;margin-left:-20px;text-align:center;font-size:12.7px;font-weight:700;color:#c8ccd2">1</span>
<span class="t" style="left:418.60px;top:576.25px;width:40px;margin-left:-20px;text-align:center;font-size:12.7px;font-weight:700;color:#c8ccd2">2</span>
<span class="t" style="left:470.32px;top:576.25px;width:40px;margin-left:-20px;text-align:center;font-size:12.7px;font-weight:700;color:#c8ccd2">3</span>
<span class="t" style="left:522.05px;top:576.25px;width:40px;margin-left:-20px;text-align:center;font-size:12.7px;font-weight:700;color:#c8ccd2">4</span>
<span class="t" style="left:573.78px;top:576.25px;width:40px;margin-left:-20px;text-align:center;font-size:12.7px;font-weight:700;color:#c8ccd2">5</span>
<span class="t" style="left:625.51px;top:576.25px;width:40px;margin-left:-20px;text-align:center;font-size:12.7px;font-weight:700;color:#c8ccd2">6</span>
<span class="t" style="left:677.25px;top:576.25px;width:40px;margin-left:-20px;text-align:center;font-size:12.7px;font-weight:700;color:#c8ccd2">7</span>
<span class="t" style="left:728.97px;top:576.25px;width:40px;margin-left:-20px;text-align:center;font-size:12.7px;font-weight:700;color:#c8ccd2">8</span>
<span class="t" style="left:780.70px;top:576.25px;width:40px;margin-left:-20px;text-align:center;font-size:12.7px;font-weight:700;color:#c8ccd2">9</span>
<span class="t" style="left:832.43px;top:576.25px;width:40px;margin-left:-20px;text-align:center;font-size:12.7px;font-weight:700;color:#c8ccd2">10</span>
<span class="t" style="left:884.16px;top:576.25px;width:40px;margin-left:-20px;text-align:center;font-size:12.7px;font-weight:700;color:#c8ccd2">11</span>
<span class="t" style="left:935.89px;top:576.25px;width:40px;margin-left:-20px;text-align:center;font-size:12.7px;font-weight:700;color:#c8ccd2">12</span>
<span class="t" style="left:987.62px;top:576.25px;width:40px;margin-left:-20px;text-align:center;font-size:12.7px;font-weight:700;color:#c8ccd2">13</span>
<span class="t" style="left:1039.36px;top:576.25px;width:40px;margin-left:-20px;text-align:center;font-size:12.7px;font-weight:700;color:#c8ccd2">14</span>
<span class="t" style="left:1091.09px;top:576.25px;width:40px;margin-left:-20px;text-align:center;font-size:12.7px;font-weight:700;color:#c8ccd2">15</span>
<span class="t" style="left:1142.82px;top:576.25px;width:40px;margin-left:-20px;text-align:center;font-size:12.7px;font-weight:700;color:#c8ccd2">16</span>
<span class="t" style="left:1194.55px;top:576.25px;width:40px;margin-left:-20px;text-align:center;font-size:12.7px;font-weight:700;color:#c8ccd2">17</span>
<span class="t" style="left:1246.28px;top:576.25px;width:40px;margin-left:-20px;text-align:center;font-size:12.7px;font-weight:700;color:#c8ccd2">18</span>
<span class="t" style="left:1298.01px;top:576.25px;width:40px;margin-left:-20px;text-align:center;font-size:12.7px;font-weight:700;color:#c8ccd2">19</span>
<span class="t" style="left:1349.73px;top:576.25px;width:40px;margin-left:-20px;text-align:center;font-size:12.7px;font-weight:700;color:#c8ccd2">20</span>
<span class="t" style="left:1401.46px;top:576.25px;width:40px;margin-left:-20px;text-align:center;font-size:12.7px;font-weight:700;color:#c8ccd2">21</span>
<span class="t" style="left:1453.19px;top:576.25px;width:40px;margin-left:-20px;text-align:center;font-size:12.7px;font-weight:700;color:#c8ccd2">22</span>
<span class="t" style="left:1504.92px;top:576.25px;width:40px;margin-left:-20px;text-align:center;font-size:12.7px;font-weight:700;color:#c8ccd2">23</span>
<span class="t" style="left:1556.65px;top:576.25px;width:40px;margin-left:-20px;text-align:center;font-size:12.7px;font-weight:700;color:#c8ccd2">24</span>
<span class="t" style="left:1608.38px;top:576.25px;width:40px;margin-left:-20px;text-align:center;font-size:12.7px;font-weight:700;color:#c8ccd2">25</span>
<span class="t" style="left:1660.12px;top:576.25px;width:40px;margin-left:-20px;text-align:center;font-size:12.7px;font-weight:700;color:#c8ccd2">26</span>
<span class="t" style="left:1711.85px;top:576.25px;width:40px;margin-left:-20px;text-align:center;font-size:12.7px;font-weight:700;color:#c8ccd2">27</span>
<span class="t" style="left:1763.57px;top:576.25px;width:40px;margin-left:-20px;text-align:center;font-size:12.7px;font-weight:700;color:#c8ccd2">28</span>
<span class="t" style="left:1815.30px;top:576.25px;width:40px;margin-left:-20px;text-align:center;font-size:12.7px;font-weight:700;color:#c8ccd2">29</span>
<span class="t" style="left:1867.03px;top:576.25px;width:40px;margin-left:-20px;text-align:center;font-size:12.7px;font-weight:700;color:#c8ccd2">30</span>
<div class="r" style="left:176px;top:595px;width:161px;height:485px;overflow:hidden">
<span id="t42" class="t" style="left:8.00px;top:11.82px;font-size:13.80px;color:#3f97d0;font-weight:700;font-family:'Liberation Sans', sans-serif;transform:scaleX(0.934);transform-origin:0 0;white-space:nowrap;">Air Purifier - Dyson</span>
<span id="t43" class="t" style="left:8.00px;top:48.82px;font-size:13.80px;color:#3f97d0;font-weight:700;font-family:'Liberation Sans', sans-serif;transform:scaleX(0.934);transform-origin:0 0;white-space:nowrap;">Air Purifier - Xiaomi</span>
<span id="t44" class="t" style="left:8.00px;top:85.82px;font-size:13.80px;color:#3f97d0;font-weight:700;font-family:'Liberation Sans', sans-serif;transform:scaleX(0.934);transform-origin:0 0;white-space:nowrap;">android-68608b93a00e4</span>
<span id="t45" class="t" style="left:8.00px;top:122.82px;font-size:13.80px;color:#3f97d0;font-weight:700;font-family:'Liberation Sans', sans-serif;transform:scaleX(0.934);transform-origin:0 0;white-space:nowrap;">Camera - E1</span>
<span id="t46" class="t" style="left:8.00px;top:159.82px;font-size:13.80px;color:#3f97d0;font-weight:700;font-family:'Liberation Sans', sans-serif;transform:scaleX(0.934);transform-origin:0 0;white-space:nowrap;">Chromecast</span>
<span id="t47" class="t" style="left:8.00px;top:196.82px;font-size:13.80px;color:#3f97d0;font-weight:700;font-family:'Liberation Sans', sans-serif;transform:scaleX(0.934);transform-origin:0 0;white-space:nowrap;">Console - Nvidia Shield TV</span>
<span id="t48" class="t" style="left:8.00px;top:233.82px;font-size:13.80px;color:#3f97d0;font-weight:700;font-family:'Liberation Sans', sans-serif;transform:scaleX(0.934);transform-origin:0 0;white-space:nowrap;">ESP32 - 1</span>
<span id="t49" class="t" style="left:8.00px;top:270.82px;font-size:13.80px;color:#3f97d0;font-weight:700;font-family:'Liberation Sans', sans-serif;transform:scaleX(0.934);transform-origin:0 0;white-space:nowrap;">ESP32 - 1n - Laser Toy</span>
<span id="t50" class="t" style="left:8.00px;top:307.82px;font-size:13.80px;color:#3f97d0;font-weight:700;font-family:'Liberation Sans', sans-serif;transform:scaleX(0.934);transform-origin:0 0;white-space:nowrap;">ESP32 - ttgo</span>
<span id="t51" class="t" style="left:8.00px;top:344.82px;font-size:13.80px;color:#3f97d0;font-weight:700;font-family:'Liberation Sans', sans-serif;transform:scaleX(0.934);transform-origin:0 0;white-space:nowrap;">Hub - Cygnet Hub</span>
<span id="t52" class="t" style="left:8.00px;top:381.82px;font-size:13.80px;color:#3f97d0;font-weight:700;font-family:'Liberation Sans', sans-serif;transform:scaleX(0.934);transform-origin:0 0;white-space:nowrap;">Hub - Xiaomi</span>
<span id="t53" class="t" style="left:8.00px;top:418.82px;font-size:13.80px;color:#3f97d0;font-weight:700;font-family:'Liberation Sans', sans-serif;transform:scaleX(0.934);transform-origin:0 0;white-space:nowrap;">LED strip</span>
<span id="t54" class="t" style="left:8.00px;top:455.82px;font-size:13.80px;color:#3f97d0;font-weight:700;font-family:'Liberation Sans', sans-serif;transform:scaleX(0.934);transform-origin:0 0;white-space:nowrap;">Light - bedside B WiFi</span>
</div>
<div class="r" style="left:1915.00px;top:0.00px;width:4.00px;height:355.00px;background:rgba(210,210,210,0.55);border-radius:2px"></div>
</body></html>
